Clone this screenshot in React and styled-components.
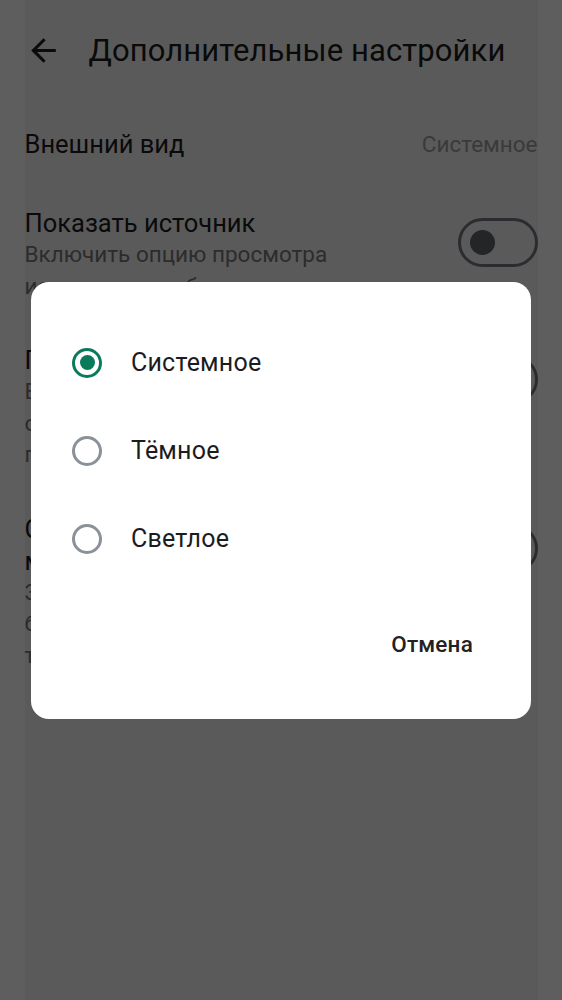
import React from "react";
import styled, { createGlobalStyle } from "styled-components";

const GlobalStyle = createGlobalStyle`
  html, body {
    margin: 0;
    padding: 0;
    background: #ffffff;
    font-family: Roboto, "Noto Sans", "Liberation Sans", sans-serif;
    -webkit-font-smoothing: antialiased;
  }
  * { box-sizing: border-box; }
`;

const Page = styled.div`
  min-height: 1000px;
  background: #ffffff;
  display: flex;
  justify-content: center;
`;

const Column = styled.div`
  width: 513px;
  min-height: 1000px;
  background: #f4f4f4;
`;

const Header = styled.header`
  height: 105px;
  display: flex;
  align-items: center;
  gap: 27px;
  padding-bottom: 5px;
`;

const BackButton = styled.button`
  border: 0;
  background: none;
  padding: 0;
  width: 37px;
  height: 37px;
  display: flex;
  color: #1f1f1f;
`;

const Title = styled.h1`
  margin: 0;
  font-size: 31px;
  font-weight: 400;
  color: #1b1b1b;
  letter-spacing: 0.1px;
  white-space: nowrap;
`;

const List = styled.div`
  display: flex;
  flex-direction: column;
`;

const Row = styled.div`
  display: flex;
  justify-content: space-between;
  align-items: ${(p) => (p.$center ? "center" : "flex-start")};
  gap: 24px;
  padding: 23px 0 ${(p) => (p.$center ? "24px" : "19px")};
`;

const TextBlock = styled.div`
  flex: 1;
  min-width: 0;
`;

const RowTitle = styled.div`
  font-size: 25.5px;
  line-height: 32px;
  color: #1b1b1b;
  white-space: pre-line;
`;

const RowSub = styled.div`
  font-size: 22.5px;
  line-height: 31.5px;
  color: #777777;
  white-space: pre-line;
`;

const RowValue = styled.div`
  font-size: 22.5px;
  color: #9e9e9e;
`;

const Switch = styled.div`
  flex: none;
  width: 80px;
  height: 49px;
  margin-top: 11px;
  border: 3px solid #737880;
  border-radius: 25px;
  display: flex;
  align-items: center;
  padding-left: 9px;
`;

const Thumb = styled.span`
  width: 25px;
  height: 25px;
  border-radius: 50%;
  background: #5f646b;
`;

const Scrim = styled.div`
  position: fixed;
  inset: 0;
  background: rgba(0, 0, 0, 0.63);
  display: flex;
  align-items: center;
  justify-content: center;
`;

const Dialog = styled.div`
  width: 500px;
  height: 437px;
  background: #ffffff;
  border-radius: 18px;
  padding: 37px 0 0;
  display: flex;
  flex-direction: column;
`;

const Option = styled.label`
  display: flex;
  align-items: center;
  gap: 29px;
  height: 88px;
  padding-left: 41px;
  font-size: 25px;
  color: #1c1c1e;
  letter-spacing: 0.2px;
`;

const Radio = styled.span`
  width: 30px;
  height: 30px;
  border-radius: 50%;
  border: 3px solid ${(p) => (p.$checked ? "#0b7a5c" : "#8b9199")};
  display: flex;
  align-items: center;
  justify-content: center;
  flex: none;
  &::after {
    content: "";
    width: 15px;
    height: 15px;
    border-radius: 50%;
    background: ${(p) => (p.$checked ? "#0b7a5c" : "transparent")};
  }
`;

const Actions = styled.div`
  display: flex;
  justify-content: flex-end;
  padding: 37px 46px 0 0;
`;

const TextButton = styled.button`
  border: 0;
  background: none;
  height: 48px;
  padding: 0 12px;
  font-family: inherit;
  font-size: 22.5px;
  font-weight: 500;
  color: #222224;
  letter-spacing: 0.2px;
`;

const ArrowBack = () => (
  <svg width="37" height="37" viewBox="0 0 24 24" fill="currentColor">
    <path d="M20 11H7.83l5.59-5.59L12 4l-8 8 8 8 1.41-1.41L7.83 13H20v-2z" />
  </svg>
);

const settings = [
  {
    title: "Показать источник",
    sub: "Включить опцию просмотра\nисточника для бесплатных",
  },
  {
    title: "Предпросмотр ссылок",
    sub: "Встраивать краткое описание\nопубликованной статьи в\nподробный просмотр",
  },
  {
    title: "Сжимать изображения в\nмобильной сети",
    sub: "Загружать изображения в\nбазовом качестве, чтобы\nтратить меньше трафика",
  },
];

const options = ["Системное", "Тёмное", "Светлое"];

export default function App() {
  return (
    <>
      <GlobalStyle />
      <Page>
        <Column>
          <Header>
            <BackButton aria-label="Назад">
              <ArrowBack />
            </BackButton>
            <Title>Дополнительные настройки</Title>
          </Header>
          <List>
            <Row $center>
              <RowTitle>Внешний вид</RowTitle>
              <RowValue>Системное</RowValue>
            </Row>
            {settings.map((s) => (
              <Row key={s.title}>
                <TextBlock>
                  <RowTitle>{s.title}</RowTitle>
                  <RowSub>{s.sub}</RowSub>
                </TextBlock>
                <Switch>
                  <Thumb />
                </Switch>
              </Row>
            ))}
          </List>
        </Column>
      </Page>
      <Scrim>
        <Dialog role="dialog">
          {options.map((o, i) => (
            <Option key={o}>
              <Radio $checked={i === 0} />
              {o}
            </Option>
          ))}
          <Actions>
            <TextButton>Отмена</TextButton>
          </Actions>
        </Dialog>
      </Scrim>
    </>
  );
}
